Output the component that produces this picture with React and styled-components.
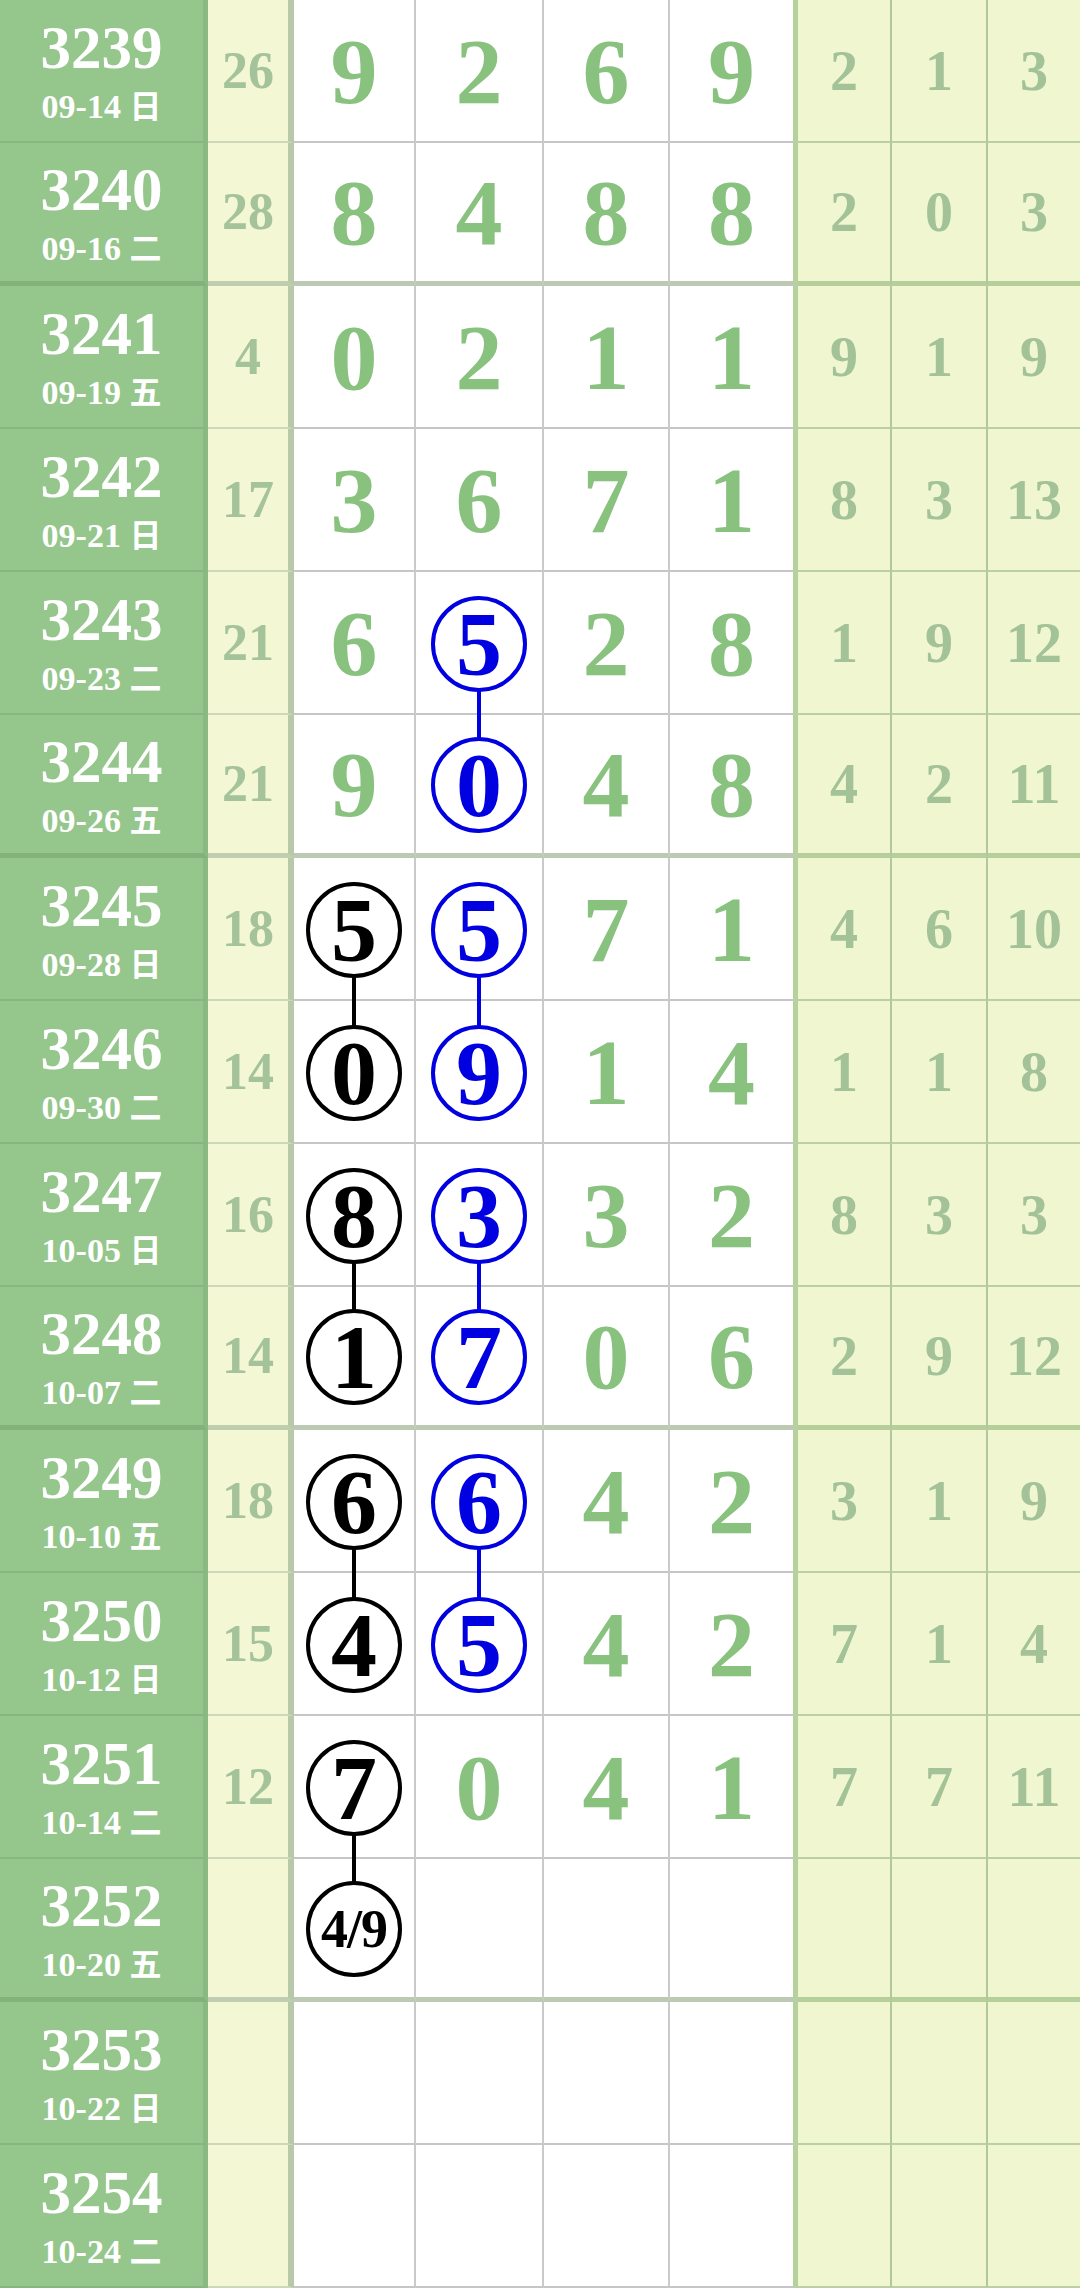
import React from 'react';
import styled, { createGlobalStyle } from 'styled-components';

const GlobalStyle = createGlobalStyle`
  html, body {
    margin: 0;
    padding: 0;
    background: #fff;
  }
  body {
    font-family: "Liberation Serif", "Noto Sans CJK SC", serif;
  }
`;

const Board = styled.div`
  width: 1080px;
  display: flex;
  flex-direction: column;
`;

const Row = styled.div`
  display: grid;
  grid-template-columns: 208px 86px 122px 128px 126px 128px 94px 96px 92px;
  height: 143px;
`;

const Cell = styled.div`
  box-sizing: border-box;
  position: relative;
  display: flex;
  align-items: center;
  justify-content: center;
  font-weight: bold;
  line-height: 1;
  border-bottom: ${p => (p.$thick ? '5px' : '2px')} solid;
`;

const IssueCell = styled(Cell)`
  flex-direction: column;
  background: #95c68c;
  color: #fff;
  border-right: 5px solid #8aba81;
  border-bottom-color: ${p => (p.$thick ? '#84b27b' : '#87b77e')};
`;

const IssueNo = styled.div`
  font-size: 61px;
  line-height: 61px;
`;

const IssueDate = styled.div`
  font-size: 34px;
  line-height: 34px;
  margin-top: 9px;
`;

const Day = styled.span`
  font-family: "Noto Sans CJK SC", sans-serif;
  font-weight: 700;
  font-size: 32px;
`;

const SumCell = styled(Cell)`
  background: #f3f7d3;
  color: #a5c39b;
  font-size: 52px;
  border-right: 6px solid #b8c9aa;
  border-bottom-color: ${p => (p.$thick ? '#bfcdb0' : '#cdd8b8')};
`;

const DigitCell = styled(Cell)`
  background: #fff;
  color: #88c27e;
  font-size: 94px;
  border-right: ${p => (p.$edge ? '5px solid #b6d29c' : '2px solid #cacaca')};
  border-bottom-color: ${p => (p.$thick ? '#bccab4' : '#c6c6c6')};
`;

const SpanCell = styled(Cell)`
  background: #f0f7d0;
  color: #a3c298;
  font-size: 56px;
  border-right: ${p => (p.$last ? 'none' : '2px solid #b2c79d')};
  border-bottom-color: ${p => (p.$thick ? '#b5ce9a' : '#bccfa4')};
`;

const Ball = styled.span`
  box-sizing: border-box;
  position: relative;
  z-index: 3;
  width: 96px;
  height: 96px;
  border-radius: 50%;
  border: 4px solid ${p => p.$color};
  background: #fff;
  color: ${p => p.$color};
  display: flex;
  align-items: center;
  justify-content: center;
  font-size: ${p => (p.$small ? '54px' : '92px')};
  letter-spacing: ${p => (p.$small ? '-1px' : '0')};
  margin-top: 2px;
`;

const Link = styled.span`
  position: absolute;
  z-index: 2;
  left: 50%;
  top: 50%;
  width: 4px;
  height: 145px;
  margin-left: -2px;
  background: ${p => p.$color};
`;

const BLACK = '#000';
const BLUE = '#0000e0';

const rows = [
  ['3239', '09-14', '日', '26', ['9', '2', '6', '9'], ['2', '1', '3']],
  ['3240', '09-16', '二', '28', ['8', '4', '8', '8'], ['2', '0', '3']],
  ['3241', '09-19', '五', '4', ['0', '2', '1', '1'], ['9', '1', '9']],
  ['3242', '09-21', '日', '17', ['3', '6', '7', '1'], ['8', '3', '13']],
  ['3243', '09-23', '二', '21', ['6', '5', '2', '8'], ['1', '9', '12']],
  ['3244', '09-26', '五', '21', ['9', '0', '4', '8'], ['4', '2', '11']],
  ['3245', '09-28', '日', '18', ['5', '5', '7', '1'], ['4', '6', '10']],
  ['3246', '09-30', '二', '14', ['0', '9', '1', '4'], ['1', '1', '8']],
  ['3247', '10-05', '日', '16', ['8', '3', '3', '2'], ['8', '3', '3']],
  ['3248', '10-07', '二', '14', ['1', '7', '0', '6'], ['2', '9', '12']],
  ['3249', '10-10', '五', '18', ['6', '6', '4', '2'], ['3', '1', '9']],
  ['3250', '10-12', '日', '15', ['4', '5', '4', '2'], ['7', '1', '4']],
  ['3251', '10-14', '二', '12', ['7', '0', '4', '1'], ['7', '7', '11']],
  ['3252', '10-20', '五', '', ['4/9', '', '', ''], ['', '', '']],
  ['3253', '10-22', '日', '', ['', '', '', ''], ['', '', '']],
  ['3254', '10-24', '二', '', ['', '', '', ''], ['', '', '']],
];

// ball colour per column, by row index
const balls = [
  { color: BLACK, rows: [6, 7, 8, 9, 10, 11, 12, 13], links: [6, 8, 10, 12] },
  { color: BLUE, rows: [4, 5, 6, 7, 8, 9, 10, 11], links: [4, 6, 8, 10] },
];

const thickRows = [1, 5, 9, 13];

function Digit({ value, col, row, thick }) {
  const mark = balls[col];
  const hasBall = mark && mark.rows.includes(row);
  const hasLink = mark && mark.links.includes(row);
  return (
    <DigitCell $thick={thick} $edge={col === 3}>
      {hasBall ? (
        <Ball $color={mark.color} $small={value.length > 1}>{value}</Ball>
      ) : (
        value
      )}
      {hasLink && <Link $color={mark.color} />}
    </DigitCell>
  );
}

export default function App() {
  return (
    <>
      <GlobalStyle />
      <Board>
        {rows.map(([id, date, day, sum, digits, spans], i) => {
          const thick = thickRows.includes(i);
          return (
            <Row key={id}>
              <IssueCell $thick={thick}>
                <IssueNo>{id}</IssueNo>
                <IssueDate>
                  {date} <Day>{day}</Day>
                </IssueDate>
              </IssueCell>
              <SumCell $thick={thick}>{sum}</SumCell>
              {digits.map((d, c) => (
                <Digit key={c} value={d} col={c} row={i} thick={thick} />
              ))}
              {spans.map((s, c) => (
                <SpanCell key={c} $thick={thick} $last={c === 2}>
                  {s}
                </SpanCell>
              ))}
            </Row>
          );
        })}
      </Board>
    </>
  );
}
